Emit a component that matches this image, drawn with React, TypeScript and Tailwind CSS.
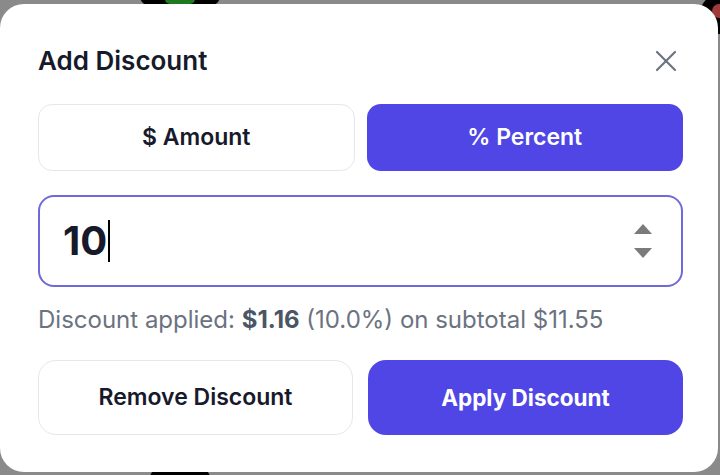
import React from "react";

function CloseIcon() {
  return (
    <svg width="24" height="24" viewBox="0 0 24 24" fill="none" stroke="#6b7280" strokeWidth="2.2" strokeLinecap="round">
      <path d="M3 3 L21 21" />
      <path d="M21 3 L3 21" />
    </svg>
  );
}

export default function App() {
  return (
    <div className="relative w-[720px] h-[475px] overflow-hidden bg-[#8a8a8a]" style={{ fontFamily: "Inter, 'Noto Sans', sans-serif" }}>
      <div className="absolute left-[140px] top-[-14px] w-[80px] h-[20px] rounded-full bg-black" />
      <div className="absolute left-[165px] top-[-6px] w-[30px] h-[10px] rounded-full bg-[#1f7a1f]" />
      <div className="absolute left-[700px] top-[-6px] w-[40px] h-[40px] rounded-full bg-black" />
      <div className="absolute left-[712px] top-[4px] w-[14px] h-[14px] rounded-full bg-[#a03a3a]" />
      <div className="absolute left-[150px] top-[468px] w-[60px] h-[20px] rounded-full bg-black" />
      <div className="relative pt-[4px] pl-0">
        <div className="w-[718px] h-[468px] bg-white rounded-[24px] px-[38px] pt-[41px] flex flex-col">
          <div className="flex items-center justify-between h-[32px]">
            <h2 className="text-[26px] leading-[32px] font-semibold text-[#171a2b]">Add Discount</h2>
            <button className="mr-[2px] text-gray-500"><CloseIcon /></button>
          </div>
          <div className="mt-[27px] grid grid-cols-2 gap-[12px] w-[645px]">
            <button className="h-[67px] rounded-[14px] border border-[#e5e7eb] bg-white text-[23px] font-semibold text-[#171a2b]">$ Amount</button>
            <button className="h-[67px] rounded-[14px] bg-[#4f46e5] text-[23px] font-semibold text-white">% Percent</button>
          </div>
          <div className="mt-[24px] w-[645px] h-[92px] rounded-[16px] border-2 border-[#6f6ad9] flex items-center pl-[23px] pr-[29px]">
            <div className="flex-1 flex items-center">
              <span className="text-[40px] font-bold text-[#171a2b] leading-none">10</span>
              <span className="ml-[1px] w-[2px] h-[42px] bg-black" />
            </div>
            <div className="flex flex-col gap-[14px] items-center">
              <svg width="18" height="10" viewBox="0 0 18 10"><path d="M9 0 L18 10 L0 10 Z" fill="#7b7b7b" /></svg>
              <svg width="18" height="10" viewBox="0 0 18 10"><path d="M0 0 L18 0 L9 10 Z" fill="#7b7b7b" /></svg>
            </div>
          </div>
          <p className="mt-[17px] text-[24px] leading-[32px] text-[#6b7280] whitespace-nowrap">
            Discount applied: <span className="font-bold text-[#4b5563]">$1.16</span> (10.0%) on subtotal $11.55
          </p>
          <div className="mt-[24px] grid grid-cols-2 gap-[15px] w-[645px]">
            <button className="h-[75px] rounded-[18px] border border-[#e5e7eb] bg-white text-[23px] font-semibold text-[#171a2b]">Remove Discount</button>
            <button className="h-[75px] rounded-[18px] bg-[#4f46e5] text-[22.5px] font-bold text-white">Apply Discount</button>
          </div>
        </div>
      </div>
    </div>
  );
}
